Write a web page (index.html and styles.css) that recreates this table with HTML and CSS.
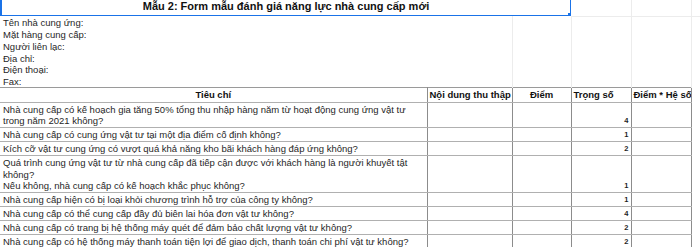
FILE: index.html
```html
<!DOCTYPE html>
<html lang="vi">
<head>
<meta charset="utf-8">
<title>Mẫu 2: Form mẫu đánh giá năng lực nhà cung cấp mới</title>
<link rel="stylesheet" href="styles.css">
</head>
<body>
<table class="sheet">
  <colgroup>
    <col class="c-a"><col class="c-b"><col class="c-c"><col class="c-d"><col class="c-e"><col class="c-f">
  </colgroup>
  <tr class="r-title">
    <td colspan="3" class="title"><div class="sel">Mẫu 2: Form mẫu đánh giá năng lực nhà cung cấp mới<span class="handle"></span></div></td>
    <td class="grid"></td><td class="grid"></td><td class="grid"></td>
  </tr>
  <tr class="r-info"><td>Tên nhà cung ứng:</td><td class="g"></td><td class="g"></td><td class="g"></td><td class="g"></td><td class="g"></td></tr>
  <tr class="r-info"><td>Mặt hàng cung cấp:</td><td class="g"></td><td class="g"></td><td class="g"></td><td class="g"></td><td class="g"></td></tr>
  <tr class="r-info"><td>Người liên lạc:</td><td class="g"></td><td class="g"></td><td class="g"></td><td class="g"></td><td class="g"></td></tr>
  <tr class="r-info"><td>Địa chỉ:</td><td class="g"></td><td class="g"></td><td class="g"></td><td class="g"></td><td class="g"></td></tr>
  <tr class="r-info"><td>Điện thoại:</td><td class="g"></td><td class="g"></td><td class="g"></td><td class="g"></td><td class="g"></td></tr>
  <tr class="r-info"><td>Fax:</td><td class="g"></td><td class="g"></td><td class="g"></td><td class="g"></td><td class="g"></td></tr>
  <tr class="r-head">
    <th class="center">Tiêu chí</th>
    <th>Nội dung thu thập</th>
    <th class="center">Điểm</th>
    <th>Trọng số</th>
    <th>Điểm * Hệ số</th>
    <td class="out"></td>
  </tr>
  <tr class="r-row"><td>Nhà cung cấp có kế hoạch gia tăng 50% tổng thu nhập hàng năm từ hoạt động cung ứng vật tư<br>trong năm 2021 không?</td><td></td><td></td><td class="num">4</td><td></td><td class="out"></td></tr>
  <tr class="r-row"><td>Nhà cung cấp có cung ứng vật tư tại một địa điểm cố định không?</td><td></td><td></td><td class="num">1</td><td></td><td class="out"></td></tr>
  <tr class="r-row"><td>Kích cỡ vật tư cung ứng có vượt quá khả năng kho bãi khách hàng đáp ứng không?</td><td></td><td></td><td class="num">2</td><td></td><td class="out"></td></tr>
  <tr class="r-row"><td>Quá trình cung ứng vật tư từ nhà cung cấp đã tiếp cận được với khách hàng là người khuyết tật<br>không?<br>Nếu không, nhà cung cấp có kế hoạch khắc phục không?</td><td></td><td></td><td class="num">1</td><td></td><td class="out"></td></tr>
  <tr class="r-row"><td>Nhà cung cấp hiện có bị loại khỏi chương trình hỗ trợ của công ty không?</td><td></td><td></td><td class="num">1</td><td></td><td class="out"></td></tr>
  <tr class="r-row"><td>Nhà cung cấp có thể cung cấp đầy đủ biên lai hóa đơn vật tư không?</td><td></td><td></td><td class="num">4</td><td></td><td class="out"></td></tr>
  <tr class="r-row"><td>Nhà cung cấp có trang bị hệ thống máy quét để đảm bảo chất lượng vật tư không?</td><td></td><td></td><td class="num">2</td><td></td><td class="out"></td></tr>
  <tr class="r-row"><td>Nhà cung cấp có hệ thống máy thanh toán tiện lợi để giao dịch, thanh toán chi phí vật tư không?</td><td></td><td></td><td class="num">2</td><td></td><td class="out"></td></tr>
</table>
</body>
</html>
```

FILE: styles.css
```css
html, body {
  margin: 0;
  padding: 0;
  background: #ffffff;
}

.sheet {
  border-collapse: collapse;
  table-layout: fixed;
  width: 700px;
  font-family: "Liberation Sans", Arial, sans-serif;
  font-size: 9.5px;
  color: #1f1f1f;
}

.c-a { width: 427px; }
.c-b { width: 85px; }
.c-c { width: 59px; }
.c-d { width: 60px; }
.c-e { width: 60px; }
.c-f { width: 9px; }

.sheet td, .sheet th {
  padding: 0 3px;
  vertical-align: bottom;
  white-space: nowrap;
  overflow: hidden;
}

/* title row */
.r-title td {
  height: 15px;
  padding: 0;
}
.r-title .grid {
  border-right: 1px solid #ececec;
  border-bottom: 1px solid #ececec;
}
.title {
  vertical-align: top;
}
.sel {
  position: relative;
  box-sizing: border-box;
  height: 16px;
  border-left: 2px solid #1a73e8;
  border-right: 1px solid #1a73e8;
  border-bottom: 1px solid #1a73e8;
  text-align: center;
  font-size: 11px;
  font-weight: bold;
  line-height: 13px;
  color: #111;
}
.handle {
  position: absolute;
  right: -3px;
  bottom: -3px;
  width: 5px;
  height: 5px;
  background: #1a73e8;
}

/* info rows */
.r-info td {
  height: 11.8px;
  line-height: 11px;
  padding-top: 0;
  padding-bottom: 0;
}
.r-info .g {
  border-right: 1px solid #ececec;
}

/* table header */
.r-head th {
  height: 12.5px;
  line-height: 12px;
  font-weight: bold;
  text-align: left;
  color: #111;
  padding-top: 0.5px;
  padding-bottom: 0.5px;
  border: 1px solid #8c8c8c;
  border-top-color: #9a9a9a;
  border-bottom-color: #b0b0b0;
}
.r-head th.center {
  text-align: center;
}
.r-head th:first-child {
  border-left: none;
}
.r-head th:nth-child(2),
.r-head th:nth-child(4),
.r-head th:nth-child(5) {
  padding-left: 2px;
  padding-right: 1px;
}

/* body rows */
.r-row td {
  line-height: 11.5px;
  padding-top: 1px;
  padding-bottom: 0.5px;
  border-right: 1px solid #8c8c8c;
  border-bottom: 1px solid #b0b0b0;
}
.r-row td.out, .r-head td.out {
  border-right: none;
  border-bottom: none;
  border-top: none;
}

.num {
  text-align: right;
  font-size: 7.5px;
  font-weight: bold;
  line-height: 10px;
  padding-right: 2px !important;
}
```
